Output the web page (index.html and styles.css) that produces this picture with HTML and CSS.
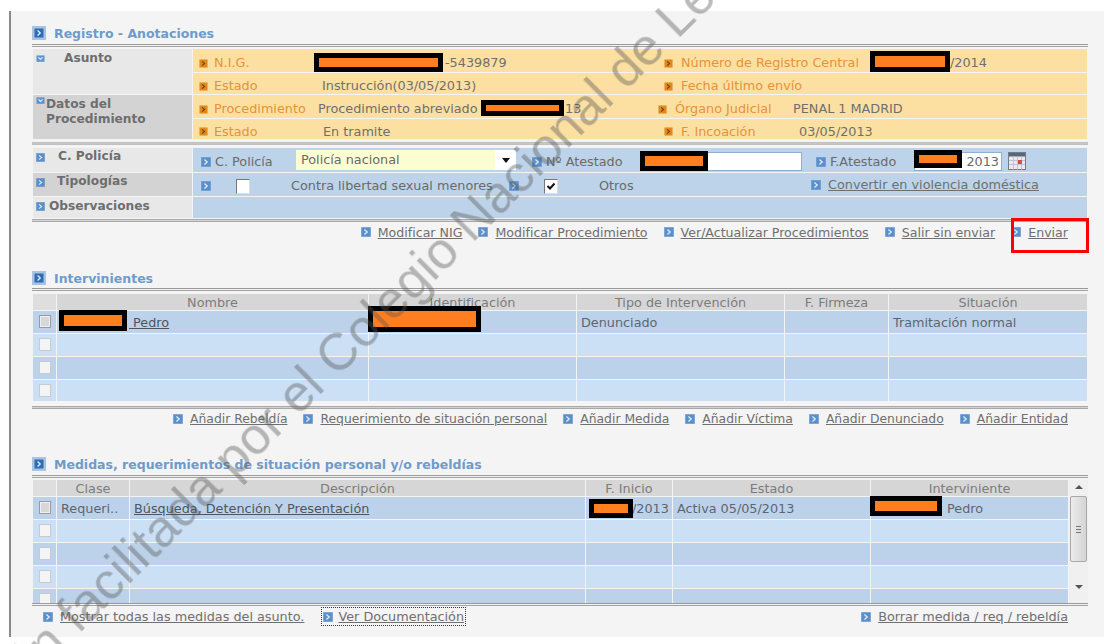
FILE: index.html
```html
<!DOCTYPE html>
<html lang="es">
<head>
<meta charset="utf-8">
<title>Registro - Anotaciones</title>
<link rel="stylesheet" href="styles.css">
</head>
<body>
<svg class="defs" width="0" height="0" aria-hidden="true">
  <symbol id="i-next" viewBox="0 0 10 10"><rect x="0.5" y="0.5" width="9" height="9" fill="currentColor" stroke="currentColor" stroke-opacity=".55"/><path d="M3.4 2.6 6.2 5 3.4 7.4" fill="none" stroke="#dfeaf6" stroke-width="1.3"/></symbol>
  <symbol id="i-orange" viewBox="0 0 10 10"><rect x="0.5" y="0.5" width="9" height="9" fill="#e08a1e"/><path d="M3.4 2.6 6.2 5 3.4 7.4" fill="none" stroke="#7a3c05" stroke-width="1.3"/></symbol>
  <symbol id="i-down" viewBox="0 0 10 10"><rect x="0" y="0.5" width="10" height="8" fill="#5f93cf"/><path d="M2.4 3 5 5.6 7.6 3" fill="none" stroke="#e6eff9" stroke-width="1.3"/></symbol>
  <symbol id="i-head" viewBox="0 0 14 14"><rect width="14" height="14" fill="#a9c3e2"/><rect x="2.5" y="2.5" width="9" height="9" fill="#2f6cb3"/><path d="M5.6 4.6 8.2 7 5.6 9.4" fill="none" stroke="#e6eff9" stroke-width="1.3"/></symbol>
</svg>
<div class="page">
  <main class="panel">
    <h2 class="title"><svg class="ico-head"><use href="#i-head"/></svg>Registro - Anotaciones</h2>
    <div class="rule rule-first"></div>
    <section class="block block-top">
      <div class="side side-light span2"><svg class="ico-down"><use href="#i-down"/></svg><span class="t-asunto">Asunto</span></div>
      <div class="y y1"><span class="lab"><svg class="ico"><use href="#i-orange"/></svg>N.I.G.</span><span class="val">-5439879</span><span class="lab lab-r"><svg class="ico"><use href="#i-orange"/></svg>Número de Registro Central</span><span class="val">/2014</span></div>
      <div class="y y2"><span class="lab"><svg class="ico"><use href="#i-orange"/></svg>Estado</span><span class="val">Instrucción(03/05/2013)</span><span class="lab lab-r"><svg class="ico"><use href="#i-orange"/></svg>Fecha último envío</span></div>
      <div class="side side-dark span2"><svg class="ico-down ico-down-tight"><use href="#i-down"/></svg><span class="t-datos">Datos del<br>Procedimiento</span></div>
      <div class="y y3"><span class="lab"><svg class="ico"><use href="#i-orange"/></svg>Procedimiento</span><span class="val">Procedimiento abreviado</span><span class="val">13</span><span class="lab lab-r"><svg class="ico"><use href="#i-orange"/></svg>Órgano Judicial</span><span class="val">PENAL 1 MADRID</span></div>
      <div class="y y4"><span class="lab"><svg class="ico"><use href="#i-orange"/></svg>Estado</span><span class="val">En tramite</span><span class="lab lab-r"><svg class="ico"><use href="#i-orange"/></svg>F. Incoación</span><span class="val">03/05/2013</span></div>
    </section>
    <div class="rule rule-soft"></div>
    <section class="block block-low">
      <div class="side side-light"><svg class="ico side-ico"><use href="#i-next"/></svg><span class="t-policia">C. Policía</span></div>
      <div class="b b1">
        <span class="flab"><svg class="ico"><use href="#i-next"/></svg>C. Policía</span>
        <div class="select"><span class="select-v">Policía nacional</span><span class="select-btn"><i class="tri-down"></i></span></div>
        <span class="flab"><svg class="ico"><use href="#i-next"/></svg>Nº Atestado</span>
        <div class="input input-a"></div>
        <span class="flab"><svg class="ico"><use href="#i-next"/></svg>F.Atestado</span>
        <div class="input input-d">2013</div>
        <svg class="cal" viewBox="0 0 18 18"><rect x="0.5" y="0.5" width="17" height="17" fill="#f1e6ea" stroke="#6f7c8c"/><rect x="1" y="1" width="16" height="3.5" fill="#5a6675"/><path d="M1 8.5h16M1 12.5h16M5.5 4.5v13M9.5 4.5v13M13.5 4.5v13" stroke="#b9c4d6" stroke-width="1"/><rect x="10" y="8" width="4" height="4" fill="#d94a4a"/></svg>
      </div>
      <div class="side side-dark"><svg class="ico side-ico"><use href="#i-next"/></svg><span class="t-tipo">Tipologías</span></div>
      <div class="b b2">
        <svg class="ico"><use href="#i-next"/></svg>
        <span class="check"></span>
        <span class="fval">Contra libertad sexual menores</span>
        <svg class="ico"><use href="#i-next"/></svg>
        <span class="check check-on"><svg viewBox="0 0 12 12"><path d="M2.5 6 5 8.5 9.5 3.5" fill="none" stroke="#111" stroke-width="2"/></svg></span>
        <span class="fval">Otros</span>
        <span class="flab flab-up"><svg class="ico"><use href="#i-next"/></svg><a href="#" class="link">Convertir en violencia doméstica</a></span>
      </div>
      <div class="side side-light"><svg class="ico side-ico"><use href="#i-next"/></svg><span class="t-obs">Observaciones</span></div>
      <div class="b"></div>
    </section>
    <div class="rule rule-tight"></div>
    <nav class="links links-1">
      <span class="lnk"><svg class="ico"><use href="#i-next"/></svg><a href="#" class="link">Modificar NIG</a></span>
      <span class="lnk"><svg class="ico"><use href="#i-next"/></svg><a href="#" class="link">Modificar Procedimiento</a></span>
      <span class="lnk"><svg class="ico"><use href="#i-next"/></svg><a href="#" class="link">Ver/Actualizar Procedimientos</a></span>
      <span class="lnk"><svg class="ico"><use href="#i-next"/></svg><a href="#" class="link">Salir sin enviar</a></span>
      <span class="lnk"><svg class="ico"><use href="#i-next"/></svg><a href="#" class="link">Enviar</a></span>
    </nav>

    <h2 class="title title-2"><svg class="ico-head"><use href="#i-head"/></svg>Intervinientes</h2>
    <div class="rule rule-thin"></div>
    <section class="grid grid-a">
      <div class="th th-c"></div><div class="th">Nombre</div><div class="th">Identificación</div><div class="th">Tipo de Intervención</div><div class="th">F. Firmeza</div><div class="th">Situación</div>
      <div class="td dk cc"><span class="box box-g"></span></div><div class="td dk"><a href="#" class="link link-pedro">&nbsp;Pedro</a></div><div class="td dk"></div><div class="td dk">Denunciado</div><div class="td dk"></div><div class="td dk">Tramitación normal</div>
      <div class="td lt cc"><span class="box"></span></div><div class="td lt"></div><div class="td lt"></div><div class="td lt"></div><div class="td lt"></div><div class="td lt"></div>
      <div class="td dk cc"><span class="box"></span></div><div class="td dk"></div><div class="td dk"></div><div class="td dk"></div><div class="td dk"></div><div class="td dk"></div>
      <div class="td lt cc"><span class="box"></span></div><div class="td lt"></div><div class="td lt"></div><div class="td lt"></div><div class="td lt"></div><div class="td lt"></div>
    </section>
    <div class="rule rule-a"></div>
    <nav class="links links-2">
      <span class="lnk"><svg class="ico"><use href="#i-next"/></svg><a href="#" class="link">Añadir Rebeldía</a></span>
      <span class="lnk"><svg class="ico"><use href="#i-next"/></svg><a href="#" class="link">Requerimiento de situación personal</a></span>
      <span class="lnk"><svg class="ico"><use href="#i-next"/></svg><a href="#" class="link">Añadir Medida</a></span>
      <span class="lnk"><svg class="ico"><use href="#i-next"/></svg><a href="#" class="link">Añadir Víctima</a></span>
      <span class="lnk"><svg class="ico"><use href="#i-next"/></svg><a href="#" class="link">Añadir Denunciado</a></span>
      <span class="lnk"><svg class="ico"><use href="#i-next"/></svg><a href="#" class="link">Añadir Entidad</a></span>
    </nav>

    <h2 class="title title-3"><svg class="ico-head"><use href="#i-head"/></svg>Medidas, requerimientos de situación personal y/o rebeldías</h2>
    <div class="rule rule-b"></div>
    <section class="scroller">
      <div class="grid grid-b">
        <div class="th th-c"></div><div class="th">Clase</div><div class="th">Descripción</div><div class="th">F. Inicio</div><div class="th">Estado</div><div class="th">Interviniente</div>
        <div class="td dk cc"><span class="box box-g"></span></div><div class="td dk">Requeri..</div><div class="td dk"><a href="#" class="link link-dark">Búsqueda, Detención Y Presentación</a></div><div class="td dk td-r">/2013</div><div class="td dk">Activa 05/05/2013</div><div class="td dk td-p">Pedro</div>
        <div class="td lt cc"><span class="box"></span></div><div class="td lt"></div><div class="td lt"></div><div class="td lt"></div><div class="td lt"></div><div class="td lt"></div>
        <div class="td dk cc"><span class="box"></span></div><div class="td dk"></div><div class="td dk"></div><div class="td dk"></div><div class="td dk"></div><div class="td dk"></div>
        <div class="td lt cc"><span class="box"></span></div><div class="td lt"></div><div class="td lt"></div><div class="td lt"></div><div class="td lt"></div><div class="td lt"></div>
        <div class="td dk cc clip"><span class="box"></span></div><div class="td dk"></div><div class="td dk"></div><div class="td dk"></div><div class="td dk"></div><div class="td dk"></div>
      </div>
      <div class="sbar">
        <i class="tri-up"></i>
        <div class="thumb"><span class="grip"></span></div>
        <i class="tri-dn"></i>
      </div>
    </section>
    <div class="rule rule-c"></div>
    <nav class="links links-b">
      <span class="lnk lnk-a"><svg class="ico"><use href="#i-next"/></svg><a href="#" class="link">Mostrar todas las medidas del asunto.</a></span>
      <span class="lnk lnk-focus"><svg class="ico"><use href="#i-next"/></svg><a href="#" class="link">Ver Documentación</a></span>
      <span class="lnk lnk-end"><svg class="ico"><use href="#i-next"/></svg><a href="#" class="link">Borrar medida / req / rebeldía</a></span>
    </nav>
  </main>

  <i class="red r1"></i><i class="red r2"></i><i class="red r3"></i><i class="red r4"></i><i class="red r5"></i><i class="red r6"></i><i class="red r7"></i><i class="red r8"></i><i class="red r9"></i>
  <div class="redbox"></div>
  <div class="wm">Información facilitada por el Colegio Nacional de Letrados</div>
</div>
</body>
</html>
```
FILE: styles.css
```css
html, body { margin: 0; padding: 0; background: #fff; overflow: hidden; }
.defs { position: absolute; }
.page {
  position: relative; width: 1104px; height: 644px; overflow: hidden;
  font: 12.8px/1.2 "DejaVu Sans", Verdana, sans-serif; color: #6a6a6a;
  filter: blur(.35px);
}
.panel {
  box-sizing: border-box; margin: 11px 0 0 9px; width: 1095px; height: 626px;
  border-left: 2px solid #8a8a8a; background: #f4f4f4;
  padding: 14px 16px 0 21px;
  display: flex; flex-direction: column;
}
.title {
  margin: 0; height: 16px; display: flex; align-items: center; gap: 8px;
  font-size: 12.5px; font-weight: bold; color: #6d9bcc;
}
.title-2 { margin-top: 27px; }
.title-3 { margin-top: 28px; }
.ico-head { width: 14px; height: 14px; flex: none; }
.ico { width: 10px; height: 10px; flex: none; color: #5b8fcb; }
.rule { height: 3px; margin-top: 3px; border-top: 1px solid #9a9a9a; border-bottom: 1px solid #a3a3a3; background: #f2f2f2; box-sizing: border-box; flex: none; }
.rule-soft { margin-top: 3px; margin-bottom: 3px; background: #c7c7c7; border-color: #c0c0c0; }
.rule-tight { margin-top: 1px; background: #d5d5d5; border-color: #a9a9a9; }
.rule-thin { margin-top: 2px; margin-bottom: 3px; }
.rule-a { margin-top: 5px; background: #d0d0d0; border-color: #a9a9a9; }
.rule-b { margin-bottom: 2px; }
.rule-c { margin-top: 0; }

.block { display: grid; grid-template-columns: 159px 1fr; gap: 1px; margin-left: 1px; margin-right: 1px; }
.block-top { margin-top: 2px; grid-template-rows: 23px 21px 23px 20px; }
.block-low { grid-template-rows: 24px 23px 21px; }
.side { font-weight: bold; color: #6e6e6e; position: relative; display: flex; align-items: flex-start; font-size: 12.2px; }
.side-light { background: #e9e8e8; }
.side-dark { background: #d3d3d3; }
.span2 { grid-row: span 2; }
.ico-down { width: 9px; height: 8px; margin: 6px 0 0 3px; flex: none; }
.ico-down-tight { margin-top: 2px; }
.t-asunto { margin: 2px 0 0 19px; }
.t-datos { margin: 2px 0 0 1px; line-height: 15px; }
.side-ico { width: 9px; height: 9px; margin: 5px 0 0 3px; }
.t-policia { margin: 0 0 0 13px; padding-top: 1px; }
.t-tipo { margin: 0 0 0 12px; padding-top: 1px; }
.t-obs { margin: 0 0 0 4px; padding-top: 2px; }

.y { background: #fbe0a1; display: grid; align-items: center; padding: 5px 0 0 6px; }
.y1 { grid-template-columns: 246px 219px 286px 1fr; }
.y2 { grid-template-columns: 123px 342px 1fr; }
.y3 { grid-template-columns: 119px 247px 93px 135px 1fr; }
.y4 { grid-template-columns: 124px 341px 135px 1fr; }
.lab { color: #e7923a; display: flex; align-items: center; gap: 6px; white-space: nowrap; }
.lab .ico { width: 9px; height: 9px; }
.lab-r { gap: 8px; }
.val { white-space: nowrap; color: #6f6f6f; }

.b { background: #bdd3ea; display: grid; align-items: center; padding: 3px 0 0 8px; }
.b1 { grid-template-columns: 95px 236px 108px 176px 98px 94px auto; }
.b2 { grid-template-columns: 35px 55px 218px 35px 55px 212px auto; }
.flab { display: flex; align-items: center; gap: 4px; white-space: nowrap; }
.flab-up { gap: 7px; margin-top: -3px; }
.fval { white-space: nowrap; }
.select { width: 220px; height: 20px; margin-top: -3px; background: #fff; display: flex; }
.select-v { flex: 1; padding-left: 5px; background: #fdfdd2; line-height: 19px; }
.select-btn { width: 21px; display: flex; align-items: center; justify-content: center; }
.tri-down { border: 4px solid transparent; border-top: 5px solid #111; border-bottom: 0; }
.input { height: 19px; margin-top: -1px; box-sizing: border-box; background: #fff; border: 1px solid #8fb0d3; text-align: right; line-height: 18px; padding-right: 2px; }
.input-a { width: 162px; }
.input-d { width: 88px; }
.cal { width: 18px; height: 18px; margin-top: -1px; }
.check { display: block; width: 12px; height: 13px; background: #fff; border: 1px solid #8a8f96; border-color: #777 #ddd #ddd #777; }
.check-on svg { display: block; width: 12px; height: 12px; }

.links { display: flex; justify-content: flex-end; align-items: center; gap: 16px; height: 21px; padding-right: 20px; flex: none; }
.links-1 { font-size: 12.6px; }
.links-2 { font-size: 12.35px; height: 18px; padding-top: 1px; }
.links-b { justify-content: flex-start; padding: 0 20px 0 11px; height: 21px; }
.lnk { display: flex; align-items: center; gap: 7px; white-space: nowrap; }
.link { color: #6f6f6f; text-decoration: underline; }
.link-dark, .link-pedro { color: #4c5560; }
.link-pedro { margin-left: 68px; }
.lnk-focus { margin-left: 3px; outline: 1px dotted #333; outline-offset: 1px; gap: 5px; }
.lnk-end { margin-left: auto; }

.grid { display: grid; gap: 1px; margin-left: 1px; }
.grid-a { grid-template-columns: 23px 311px 207px 207px 103px 198px; grid-template-rows: 16px 22px 22px 22px 21px; }
.grid-b { flex: 1; grid-template-columns: 23px 72px 455px 86px 197px 197px; grid-template-rows: 16px repeat(4, 22px) 14px; }
.th { background: #d6d6d6; text-align: center; color: #7c7c7c; line-height: 15px; padding-top: 1px; white-space: nowrap; overflow: hidden; }
.th-c { background: #dedede; }
.td { line-height: 21px; padding: 1px 0 0 4px; color: #5c6670; white-space: nowrap; overflow: hidden; }
.dk { background: #bcd2ea; }
.lt { background: #cbdff5; }
.td-r { padding-left: 46px; }
.td-p { padding-left: 76px; }
.cc { padding: 4px 0 0; display: flex; justify-content: center; box-sizing: border-box; }
.box { display: block; box-sizing: border-box; width: 12px; height: 13px; background: #f4f4f4; border: 1px solid #c4cbd4; }
.box-g { background: #d8d8d8; border-color: #9b9b9b; box-shadow: inset 0 0 0 1px #eee; }
.clip { overflow: hidden; }
.scroller { display: flex; flex: none; height: 123px; }
.sbar { width: 19px; background: #f0f0f0; display: flex; flex-direction: column; align-items: center; position: relative; }
.tri-up { border: 4px solid transparent; border-bottom: 4px solid #555; border-top: 0; margin-top: 5px; }
.tri-dn { border: 4px solid transparent; border-top: 4px solid #555; border-bottom: 0; margin-top: 23px; }
.thumb { box-sizing: border-box; width: 17px; height: 66px; margin-top: 7px; background: linear-gradient(90deg, #ececec, #d4d4d4); border: 1px solid #a8a8a8; border-radius: 2px; display: flex; align-items: center; justify-content: center; }
.grip { width: 5px; height: 5px; border-top: 1px solid #777; border-bottom: 1px solid #777; background: linear-gradient(#777, #777) center/100% 1px no-repeat; }

.red { position: absolute; box-sizing: border-box; background: #ff7f20; border: 5px solid #000; }
.r1 { left: 314px; top: 53px; width: 129px; height: 19px; }
.r2 { left: 870px; top: 51px; width: 80px; height: 21px; }
.r3 { left: 481px; top: 100px; width: 83px; height: 16px; }
.r4 { left: 640px; top: 151px; width: 68px; height: 20px; }
.r5 { left: 914px; top: 150px; width: 48px; height: 18px; }
.r6 { left: 59px; top: 310px; width: 68px; height: 21px; }
.r7 { left: 368px; top: 306px; width: 113px; height: 26px; }
.r8 { left: 589px; top: 499px; width: 44px; height: 19px; }
.r9 { left: 870px; top: 496px; width: 72px; height: 20px; }
.redbox { position: absolute; box-sizing: border-box; left: 1011px; top: 218px; width: 78px; height: 35px; border: 3px solid #f00; }
.wm {
  position: absolute; left: -119px; top: 790px; white-space: nowrap;
  font: 52px/1 "Liberation Sans", Arial, sans-serif; color: rgba(85, 85, 85, .4);
  transform-origin: 0 100%; transform: rotate(-44.8deg);
}
```
